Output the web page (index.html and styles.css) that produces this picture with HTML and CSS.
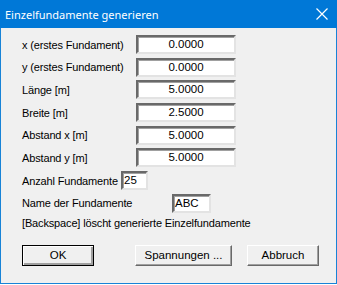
FILE: index.html
```html
<!DOCTYPE html>
<html lang="de">
<head>
    <meta charset="UTF-8">
    <title>Einzelfundamente generieren</title>
    <link rel="stylesheet" href="styles.css">
</head>
<body>
    <div class="dialog">
        <div class="titlebar">
            <span class="title">Einzelfundamente generieren</span>
            <svg class="close" width="12" height="12" viewBox="0 0 12 12">
                <path d="M0.5 0.5 L11.5 11.5 M11.5 0.5 L0.5 11.5" stroke="#fff" stroke-width="1.2"/>
            </svg>
        </div>

        <div class="content">
            <div class="row">
                <label>x (erstes Fundament)</label>
                <div class="field wide">0.0000</div>
            </div>
            <div class="row">
                <label>y (erstes Fundament)</label>
                <div class="field wide">0.0000</div>
            </div>
            <div class="row">
                <label>Länge [m]</label>
                <div class="field wide">5.0000</div>
            </div>
            <div class="row">
                <label>Breite [m]</label>
                <div class="field wide">2.5000</div>
            </div>
            <div class="row">
                <label>Abstand x [m]</label>
                <div class="field wide">5.0000</div>
            </div>
            <div class="row">
                <label>Abstand y [m]</label>
                <div class="field wide">5.0000</div>
            </div>
            <div class="row">
                <label class="short">Anzahl Fundamente</label>
                <div class="field small">25</div>
            </div>
            <div class="row">
                <label class="name">Name der Fundamente</label>
                <div class="field name-field">ABC</div>
            </div>
            <p class="hint">[Backspace] löscht generierte Einzelfundamente</p>

            <div class="buttons">
                <button class="btn default">OK</button>
                <button class="btn mid">Spannungen ...</button>
                <button class="btn">Abbruch</button>
            </div>
        </div>
    </div>
</body>
</html>
```

FILE: styles.css
```css
body {
    margin: 0;
    padding: 0;
    background: #fff;
    font-family: "Liberation Sans", Arial, sans-serif;
    font-size: 11px;
    letter-spacing: -0.15px;
    color: #000;
}

.dialog {
    width: 335px;
    height: 283px;
    border: 1px solid #1883d7;
    border-top: none;
    background: #f0f0f0;
    display: flex;
    flex-direction: column;
}

.titlebar {
    height: 28px;
    background: #0078d7;
    margin: 0 -1px;
    display: flex;
    align-items: center;
    padding: 0 9px 0 5px;
    color: #fff;
}

.title {
    flex: 1;
    font-family: "Noto Sans", sans-serif;
    font-size: 11px;
    letter-spacing: 0;
    padding-top: 1px;
}

.close {
    display: block;
}

.content {
    padding: 7px 0 0 21px;
}

.row {
    display: flex;
    align-items: center;
    height: 19px;
    margin-bottom: 3.7px;
}

.row label {
    width: 114px;
    white-space: nowrap;
}

.row label.short {
    width: 99px;
}

.row label.name {
    width: 150px;
}

.field {
    height: 19px;
    box-sizing: border-box;
    background: #fff;
    border-style: solid;
    border-width: 2px;
    border-color: #696969 #e3e3e3 #e3e3e3 #696969;
    box-shadow: inset 1px 1px 0 #a0a0a0;
    line-height: 15px;
    font-size: 11.5px;
    letter-spacing: 0;
}

.field.wide {
    width: 100px;
    text-align: center;
}

.field.small {
    width: 27px;
    padding-left: 1px;
}

.field.name-field {
    width: 39px;
    padding-left: 1px;
}

.hint {
    margin: 4px 0 0;
    height: 14px;
    white-space: nowrap;
}

.buttons {
    display: flex;
    margin-top: 14px;
}

.btn {
    height: 21px;
    width: 72px;
    box-sizing: border-box;
    font-family: "Liberation Sans", Arial, sans-serif;
    font-size: 11.5px;
    background: #f0f0f0;
    border: 1px solid;
    border-color: #fff #696969 #696969 #fff;
    box-shadow: inset -1px -1px 0 #a0a0a0;
    padding: 0;
    color: #000;
}

.btn.default {
    border-color: #000;
    box-shadow: inset 1px 1px 0 #fff, inset -2px -2px 0 #a0a0a0;
}

.btn.mid {
    width: 97px;
    margin: 0 15px 0 41px;
}
```
